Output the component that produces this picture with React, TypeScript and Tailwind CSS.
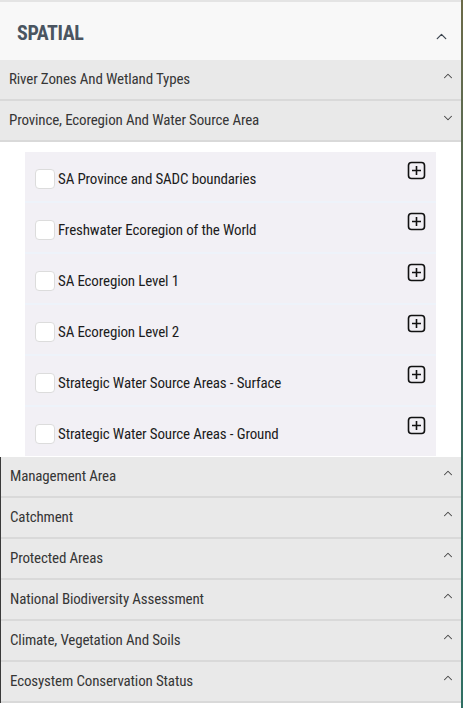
import { ChevronUp, ChevronDown } from 'lucide-react';

const layers = [
  'SA Province and SADC boundaries',
  'Freshwater Ecoregion of the World',
  'SA Ecoregion Level 1',
  'SA Ecoregion Level 2',
  'Strategic Water Source Areas - Surface',
  'Strategic Water Source Areas - Ground',
];

const lowerSections = [
  'Management Area',
  'Catchment',
  'Protected Areas',
  'National Biodiversity Assessment',
  'Climate, Vegetation And Soils',
  'Ecosystem Conservation Status',
];

function PlusSquare() {
  return (
    <svg width="19" height="19" viewBox="0 0 19 19" fill="none" stroke="#111" strokeWidth="1.6">
      <rect x="1.5" y="1.5" width="16" height="16" rx="3" />
      <path d="M9.5 5v9M5 9.5h9" />
    </svg>
  );
}

function SectionRow({ title, open }: { title: string; open?: boolean }) {
  return (
    <div className="flex h-[41px] items-center justify-between border-b-2 border-[#d9d9d9] bg-[#e9e9e9] pl-[9px] pr-[6px]">
      <span className="font-stretch-condensed text-[15px] tracking-[-0.15px] text-[#363636]">{title}</span>
      {open ? (
        <ChevronDown size={14} strokeWidth={1.8} className="mb-[6px] text-[#444]" />
      ) : (
        <ChevronUp size={14} strokeWidth={1.8} className="mb-[8px] text-[#444]" />
      )}
    </div>
  );
}

export default function App() {
  return (
    <div className="flex h-[708px] w-[463px] overflow-hidden bg-white" style={{ fontFamily: 'Roboto, "Liberation Sans", sans-serif' }}>
      <div className="flex w-[461px] flex-col border-t-2 border-[#e4e4e4]">
        {/* Spatial heading */}
        <div className="flex h-[58px] items-center justify-between bg-[#f8f8f8] pl-[17px] pr-[11px]">
          <h2 className="mt-[4px] font-stretch-condensed text-[20px] font-bold tracking-[-0.4px] text-[#4a5561]">SPATIAL</h2>
          <ChevronUp size={17} strokeWidth={1.8} className="mt-[10px] text-[#3d4650]" />
        </div>

        <SectionRow title="River Zones And Wetland Types" />
        <SectionRow title="Province, Ecoregion And Water Source Area" open />

        {/* Expanded layer list */}
        <div className="bg-white pb-[1px] pl-[25px] pr-[25px] pt-[10px]">
          <div className="flex flex-col gap-[2px] bg-[#eef3fa]">
            {layers.map((name) => (
              <div key={name} className="flex h-[49px] items-start justify-between bg-[#f2f0f5] pl-[10px] pr-[10px]">
                <label className="mt-[16px] flex items-center gap-[3px]">
                  <span className="h-[20px] w-[20px] rounded-[4px] border border-[#dcdcdc] bg-white" />
                  <span className="font-stretch-condensed text-[15px] tracking-[-0.15px] text-[#1c1c1c]">{name}</span>
                </label>
                <div className="mt-[9px]">
                  <PlusSquare />
                </div>
              </div>
            ))}
          </div>
        </div>

        <div className="flex flex-col border-l border-[#3a3a3a]">
          {lowerSections.map((s) => (
            <SectionRow key={s} title={s} />
          ))}
        </div>
      </div>
      <div className="w-[2px] bg-gradient-to-b from-[#6b6a48] via-[#3f6a5e] to-[#2f6f63]" />
    </div>
  );
}
